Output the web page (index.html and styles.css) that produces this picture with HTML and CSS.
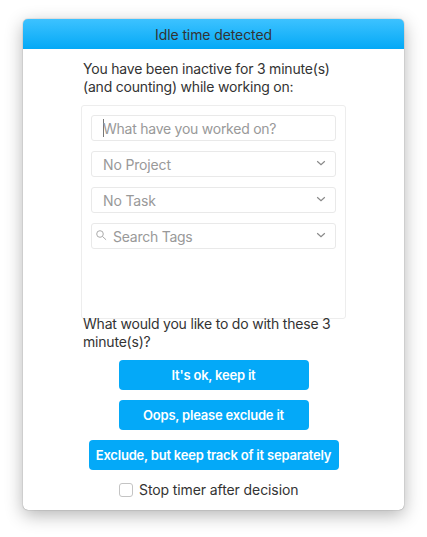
FILE: index.html
```html
<!DOCTYPE html>
<html lang="en">
<head>
<meta charset="utf-8">
<title>Idle time detected</title>
<link rel="stylesheet" href="styles.css">
</head>
<body>
<main class="window">
  <header class="titlebar">Idle time detected</header>
  <p class="message intro">You have been inactive for 3 minute(s)<br>(and counting) while working on:</p>
  <section class="panel">
    <div class="field"><span class="caret"></span><span class="label question">What have you worked on?</span></div>
    <div class="field"><span class="label">No Project</span><svg class="chevron" viewBox="0 0 10 6"><path d="M1.2 1.2L5 4.6l3.8-3.4"/></svg></div>
    <div class="field"><span class="label">No Task</span><svg class="chevron" viewBox="0 0 10 6"><path d="M1.2 1.2L5 4.6l3.8-3.4"/></svg></div>
    <div class="field search"><svg class="lens" viewBox="0 0 11 11"><circle cx="4" cy="4" r="3.3"/><path d="M6.5 6.5l3.6 3.3"/></svg><span class="label tags">Search Tags</span><svg class="chevron" viewBox="0 0 10 6"><path d="M1.2 1.2L5 4.6l3.8-3.4"/></svg></div>
  </section>
  <p class="message prompt">What would you like to do with these 3<br>minute(s)?</p>
  <div class="actions">
    <button class="button">It's ok, keep it</button>
    <button class="button">Oops, please exclude it</button>
    <button class="button wide">Exclude, but keep track of it separately</button>
  </div>
  <label class="option"><input class="checkbox" type="checkbox"><span>Stop timer after decision</span></label>
</main>
</body>
</html>
```
FILE: styles.css
```css
* { box-sizing: border-box; }

body {
  margin: 0;
  padding: 19px 23px 27px;
  height: 537px;
  overflow: hidden;
  background: #fff;
  font-family: Inter, "Liberation Sans", sans-serif;
  font-size: 14px;
  line-height: 18px;
  color: #333;
}

.window {
  width: 381px;
  height: 491px;
  border-radius: 5px;
  background: #fff;
  box-shadow: 0 0 1px rgba(0, 0, 0, .6), 0 5px 18px rgba(0, 0, 0, .3);
}

.titlebar {
  height: 30px;
  padding-top: 1px;
  border-radius: 5px 5px 0 0;
  background: linear-gradient(#3dc2ff, #04a9f6);
  line-height: 30px;
  letter-spacing: -.1px;
  text-align: center;
}

.message {
  margin: 0 0 0 60px;
  letter-spacing: -.2px;
  white-space: nowrap;
}

.intro { padding-top: 11px; height: 56px; }

.panel {
  width: 265px;
  height: 214px;
  margin-left: 58px;
  padding: 9px;
  border: 1px solid #ededed;
  border-radius: 3px;
  display: flex;
  flex-direction: column;
  gap: 10px;
}

.field {
  height: 26px;
  flex: none;
  border: 1px solid #e9e9e9;
  border-radius: 3px;
  padding: 2px 9px 0 11px;
  display: flex;
  align-items: center;
  color: #999;
}

.search { padding-left: 4px; }

.label { letter-spacing: -.15px; }

.question,
.tags { letter-spacing: -.25px; }

.caret {
  width: 1px;
  height: 18px;
  margin: -2px -1px 0 0;
  background: #777;
}

.chevron {
  width: 10px;
  height: 6px;
  margin: -5px 0 0 auto;
  fill: none;
  stroke: #888;
  stroke-width: 1.2;
}

.lens {
  width: 11px;
  height: 11px;
  margin: -3px 6px 0 0;
  fill: none;
  stroke: #aaa;
  stroke-width: 1;
}

.prompt { margin-top: -4px; height: 45px; }

.actions {
  display: flex;
  flex-direction: column;
  align-items: center;
  gap: 10px;
}

.button {
  width: 190px;
  height: 30px;
  margin: 0;
  padding: 0;
  border: 0;
  border-radius: 4px;
  background: #04a9f8;
  color: #fff;
  font: 600 13px/30px Inter, "Liberation Sans", sans-serif;
  letter-spacing: -.21px;
  white-space: nowrap;
}

.wide { width: 250px; }

.option {
  display: flex;
  align-items: center;
  margin: 11px 0 0 96px;
  gap: 6px;
  letter-spacing: -.1px;
}

.checkbox {
  appearance: none;
  width: 14px;
  height: 14px;
  margin: -1px 0 0;
  border: 1px solid #c4c4c4;
  border-radius: 3px;
  background: #fff;
}
```
